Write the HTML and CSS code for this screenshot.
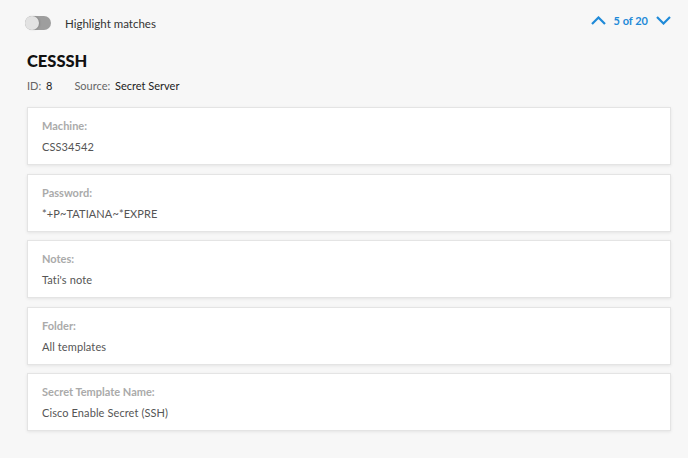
FILE: index.html
```html
<!DOCTYPE html>
<html>
<head>
<meta charset="utf-8">
<link rel="stylesheet" href="styles.css">
</head>
<body>
<div class="page">
  <div class="topbar">
    <div class="toggle-wrap">
      <span class="toggle"><span class="knob"></span></span>
      <span class="toggle-label">Highlight matches</span>
    </div>
    <div class="nav">
      <svg class="chev" width="15" height="9" viewBox="0 0 15 9"><path d="M1 8 L7.5 1.5 L14 8" fill="none" stroke="#1f8ad8" stroke-width="2.2"/></svg>
      <span class="count">5 of 20</span>
      <svg class="chev" width="15" height="9" viewBox="0 0 15 9"><path d="M1 1 L7.5 7.5 L14 1" fill="none" stroke="#1f8ad8" stroke-width="2.2"/></svg>
    </div>
  </div>
  <h1 class="title">CESSSH</h1>
  <div class="meta">
    <span>ID: <b>8</b></span>
    <span>Source: <b>Secret Server</b></span>
  </div>
  <div class="cards">
    <div class="card"><div class="label">Machine:</div><div class="value">CSS34542</div></div>
    <div class="card"><div class="label">Password:</div><div class="value">*+P~TATIANA~*EXPRE</div></div>
    <div class="card"><div class="label">Notes:</div><div class="value">Tati's note</div></div>
    <div class="card"><div class="label">Folder:</div><div class="value">All templates</div></div>
    <div class="card"><div class="label">Secret Template Name:</div><div class="value">Cisco Enable Secret (SSH)</div></div>
  </div>
</div>
</body>
</html>
```
FILE: styles.css
```css
html, body {
  margin: 0;
  padding: 0;
  background: #f7f7f7;
  font-family: Lato, "Open Sans", sans-serif;
  color: #333;
}
.page {
  width: 688px;
  height: 458px;
  box-sizing: border-box;
  padding: 12px 17px 0 25px;
}
.topbar {
  display: flex;
  justify-content: space-between;
  align-items: center;
  height: 20px;
}
.toggle-wrap {
  display: flex;
  align-items: center;
}
.toggle {
  position: relative;
  width: 26px;
  height: 14px;
  border-radius: 7px;
  background: #9e9e9e;
  display: inline-block;
  margin-top: 1px;
}
.knob {
  position: absolute;
  left: 0;
  top: 0;
  width: 14px;
  height: 14px;
  border-radius: 50%;
  background: #e2e2e2;
  box-shadow: 1px 0 2px rgba(0,0,0,0.15);
}
.toggle-label {
  margin-left: 14px;
  font-size: 11.5px;
  color: #333;
  padding-top: 2px;
}
.nav {
  display: flex;
  align-items: center;
  gap: 8px;
  margin-top: -3px;
}
.count {
  font-size: 11px;
  font-weight: bold;
  color: #1f8ad8;
}
.title {
  margin: 19px 0 0 2px;
  font-size: 16.5px;
  font-weight: 900;
  color: #111;
  line-height: 20px;
}
.meta {
  margin: 8px 0 0 2px;
  font-size: 11px;
  color: #666;
  display: flex;
  gap: 22px;
  line-height: 14px;
}
.meta b {
  font-weight: normal;
  color: #222;
  margin-left: 2px;
}
.cards {
  margin: 14px 0 0 2px;
  display: flex;
  flex-direction: column;
  gap: 8.5px;
}
.card {
  background: #fff;
  height: 58px;
  box-sizing: border-box;
  border: 1px solid #e4e4e4;
  box-shadow: 0 1px 3px rgba(0,0,0,0.08);
  padding: 11px 14px 0 14px;
  width: 644px;
}
.label {
  font-size: 11px;
  font-weight: bold;
  color: #aaa;
  line-height: 14px;
}
.value {
  margin-top: 7px;
  font-size: 11px;
  color: #555;
  line-height: 14px;
  letter-spacing: 0.1px;
}
```
